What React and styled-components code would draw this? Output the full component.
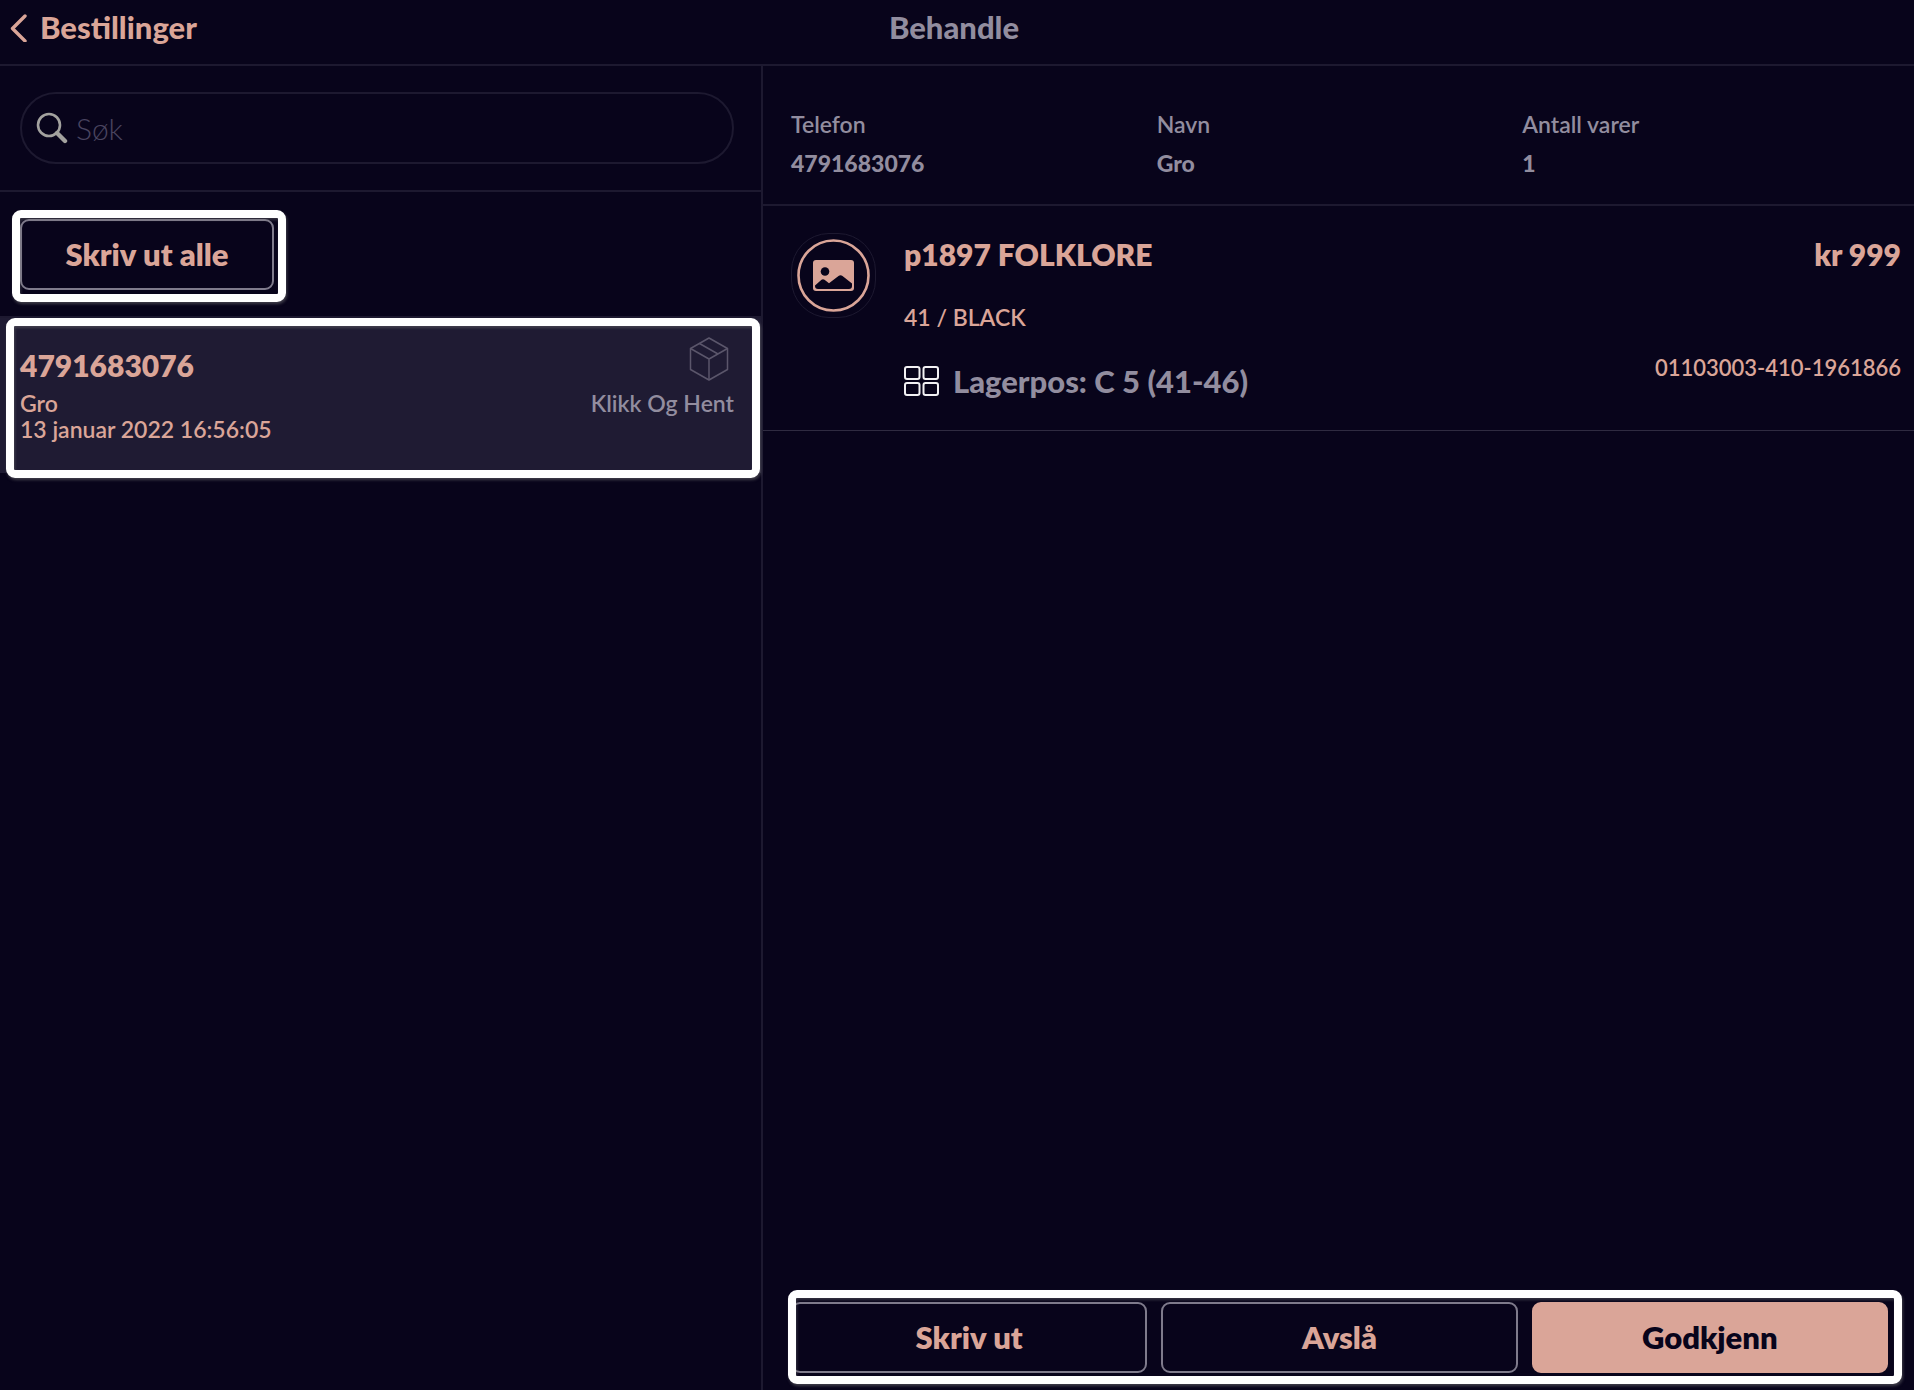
import React from 'react';
import styled, { createGlobalStyle, css } from 'styled-components';

const colors = {
  background: '#08041b',
  selected: '#1f1b33',
  line: '#1d1930',
  outline: '#7f7b8c',
  muted: '#928d9f',
  placeholder: '#4a4560',
  accent: '#daa598',
};

const GlobalStyle = createGlobalStyle`
  *,
  *::before,
  *::after {
    box-sizing: border-box;
  }

  body {
    margin: 0;
    background: ${colors.background};
    color: ${colors.accent};
    font-family: Lato, 'Open Sans', sans-serif;
    font-size: 23px;
    line-height: 26px;
  }

  h1,
  h2,
  p,
  dl,
  dd,
  ul {
    margin: 0;
    padding: 0;
  }
`;

// white marker frame drawn over a part of the screen
const marker = css`
  position: relative;

  &::after {
    content: '';
    position: absolute;
    inset: ${props => props.$inset};
    border: 8px solid #fff;
    border-radius: 9px;
    box-shadow: 1px 2px 3px rgba(120, 120, 120, 0.5),
      inset 1px 2px 3px rgba(120, 120, 120, 0.4);
    pointer-events: none;
  }
`;

const Page = styled.div`
  min-height: 100vh;
  display: flex;
  flex-direction: column;
`;

const Header = styled.header`
  height: 66px;
  padding: 0 16px 10px 10px;
  display: grid;
  grid-template-columns: 1fr auto 1fr;
  align-items: center;
  border-bottom: 2px solid ${colors.line};
`;

const BackLink = styled.a`
  display: flex;
  align-items: center;
  gap: 12px;
  font-size: 31px;
  font-weight: 900;
  line-height: 36px;
  color: ${colors.accent};
  text-decoration: none;
`;

const HeaderTitle = styled.h1`
  font-size: 31px;
  font-weight: 900;
  line-height: 36px;
  color: ${colors.muted};
`;

const Content = styled.div`
  flex: 1;
  display: grid;
  grid-template-columns: 763fr 1151fr;
`;

const Sidebar = styled.aside`
  border-right: 2px solid ${colors.line};
`;

const SearchArea = styled.div`
  padding: 26px 27px 26px 20px;
  border-bottom: 2px solid ${colors.line};
`;

const SearchBox = styled.label`
  height: 72px;
  padding: 0 14px;
  display: flex;
  align-items: center;
  gap: 8px;
  border: 2px solid ${colors.line};
  border-radius: 36px;
`;

const SearchInput = styled.input`
  flex: 1;
  min-width: 0;
  padding: 0;
  border: 0;
  outline: 0;
  background: transparent;
  font-family: inherit;
  font-size: 30px;
  font-weight: 300;
  line-height: 36px;
  color: ${colors.muted};

  &::placeholder {
    color: ${colors.placeholder};
    opacity: 1;
  }
`;

const PrintArea = styled.div`
  padding: 27px 20px 26px;
  display: flex;
  border-bottom: 2px solid ${colors.line};
`;

const PrintMarker = styled.div`
  min-width: 254px;
  ${marker};
`;

const Button = styled.button`
  width: 100%;
  height: 71px;
  padding: 0 16px 2px;
  border: 2px solid ${props => (props.$primary ? colors.accent : colors.outline)};
  border-radius: 9px;
  background: ${props => (props.$primary ? colors.accent : 'transparent')};
  font-family: inherit;
  font-size: 31px;
  font-weight: 800;
  line-height: 36px;
  color: ${props => (props.$primary ? colors.background : colors.accent)};
`;

const OrderList = styled.ul`
  list-style: none;
`;

const Order = styled.li`
  height: 155px;
  padding: 19px 27px 0 20px;
  display: flex;
  justify-content: space-between;
  background: ${colors.selected};
  ${marker};
`;

const OrderInfo = styled.div`
  padding: 10px 0 0;
  font-weight: 600;
`;

const OrderPhone = styled.h2`
  margin: 0 0 7px;
  font-size: 30px;
  font-weight: 800;
  line-height: 36px;
`;

const OrderDelivery = styled.div`
  display: flex;
  flex-direction: column;
  align-items: flex-end;
  gap: 9px;
  font-weight: 600;
  color: ${colors.muted};

  svg {
    margin: 0 5px 0 0;
  }
`;

const Details = styled.main`
  display: flex;
  flex-direction: column;
`;

const Summary = styled.dl`
  height: 140px;
  padding: 45px 26px 0 28px;
  display: grid;
  grid-template-columns: repeat(3, 1fr);
  color: ${colors.muted};
  border-bottom: 2px solid ${colors.line};
`;

const SummaryLabel = styled.dt`
  font-weight: 600;
`;

const SummaryValue = styled.dd`
  && {
    margin: 13px 0 0;
  }
  font-weight: 900;
`;

const Product = styled.section`
  height: 225px;
  padding: 27px 13px 0 28px;
  display: flex;
  gap: 28px;
  border-bottom: 1px solid ${colors.outline}55;
`;

const Thumbnail = styled.div`
  flex: none;
  width: 85px;
  height: 85px;
  display: flex;
  align-items: center;
  justify-content: center;
  border: 1px solid ${colors.line};
  border-radius: 38px;
`;

const ProductInfo = styled.div`
  flex: 1;
  padding: 3px 0 0;
`;

const ProductTitle = styled.h2`
  font-size: 30px;
  font-weight: 800;
  line-height: 36px;
`;

const ProductVariant = styled.p`
  margin: 32px 0 0;
  font-weight: 600;
`;

const Stock = styled.div`
  margin: 33px 0 0;
  display: flex;
  align-items: center;
  gap: 14px;
  font-size: 31px;
  font-weight: 900;
  line-height: 36px;
  color: ${colors.muted};
`;

const ProductPrice = styled.div`
  padding: 3px 0 0;
  text-align: right;
`;

const Sku = styled.p`
  margin: 83px 0 0;
  font-size: 22px;
  font-weight: 600;
`;

const Footer = styled.footer`
  margin: auto 0 0;
  padding: 0 26px 17px 28px;
`;

const Actions = styled.div`
  display: grid;
  grid-template-columns: repeat(3, 1fr);
  gap: 14px;
  ${marker};
`;

const ChevronIcon = () => (
  <svg width="18" height="30" viewBox="0 0 18 30" fill="none">
    <path
      d="M15 4 2.500 16.500 15 29"
      stroke={colors.accent}
      strokeWidth="3.400"
      strokeLinecap="round"
      strokeLinejoin="round"
    />
  </svg>
);

const SearchIcon = () => (
  <svg width="32" height="32" viewBox="0 0 32 32" fill="none" stroke="#a3a29f">
    <circle cx="13" cy="13" r="11" strokeWidth="2.600" />
    <path d="m21 21 8 8" strokeWidth="4.400" strokeLinecap="round" />
  </svg>
);

const BoxIcon = () => (
  <svg
    width="40"
    height="44"
    viewBox="0 0 40 44"
    fill="none"
    stroke="#5b566b"
    strokeWidth="1.500"
    strokeLinejoin="round"
  >
    <path d="M20 1 38.500 11.500v21L20 43 1.500 32.500v-21Z" />
    <path d="M1.500 11.500 20 22l18.500-10.500M20 22v21M10.500 6.500 29 17" />
  </svg>
);

const PictureIcon = () => (
  <svg width="73" height="73" viewBox="0 0 73 73">
    <circle
      cx="36.500"
      cy="36.500"
      r="35"
      fill="none"
      stroke={colors.accent}
      strokeWidth="2.600"
    />
    <rect x="16" y="21" width="41" height="31" rx="3" fill={colors.accent} />
    <g fill={colors.background}>
      <circle cx="28" cy="32.500" r="4.300" />
      <path d="M18 46.500 24.500 40.800q1.500-1.300 3 0L32 44.200l9.500-7.200q2-1.600 4 0L55 44.500V47q0 3-3 3H21q-3 0-3-3Z" />
    </g>
  </svg>
);

const GridIcon = () => (
  <svg
    width="35"
    height="30"
    viewBox="0 0 35 30"
    fill="none"
    stroke="#f2f1f4"
    strokeWidth="2"
  >
    <rect x="1" y="1" width="14.500" height="12" rx="2" />
    <rect x="19.500" y="1" width="14.500" height="12" rx="2" />
    <rect x="1" y="17" width="14.500" height="12" rx="2" />
    <rect x="19.500" y="17" width="14.500" height="12" rx="2" />
  </svg>
);

const summary = [
  { label: 'Telefon', value: '4791683076' },
  { label: 'Navn', value: 'Gro' },
  { label: 'Antall varer', value: '1' },
];

const App = () => (
  <Page>
    <GlobalStyle />
    <Header>
      <BackLink href="#bestillinger">
        <ChevronIcon />
        Bestillinger
      </BackLink>
      <HeaderTitle>Behandle</HeaderTitle>
    </Header>
    <Content>
      <Sidebar>
        <SearchArea>
          <SearchBox>
            <SearchIcon />
            <SearchInput type="text" placeholder="Søk" aria-label="Søk" />
          </SearchBox>
        </SearchArea>
        <PrintArea>
          <PrintMarker $inset="-9px -12px -12px -8px">
            <Button type="button">Skriv ut alle</Button>
          </PrintMarker>
        </PrintArea>
        <OrderList>
          <Order $inset="0 1px -5px 6px">
            <OrderInfo>
              <OrderPhone>4791683076</OrderPhone>
              <p>Gro</p>
              <p>13 januar 2022 16:56:05</p>
            </OrderInfo>
            <OrderDelivery>
              <BoxIcon />
              Klikk Og Hent
            </OrderDelivery>
          </Order>
        </OrderList>
      </Sidebar>
      <Details>
        <Summary>
          {summary.map(item => (
            <div key={item.label}>
              <SummaryLabel>{item.label}</SummaryLabel>
              <SummaryValue>{item.value}</SummaryValue>
            </div>
          ))}
        </Summary>
        <Product>
          <Thumbnail>
            <PictureIcon />
          </Thumbnail>
          <ProductInfo>
            <ProductTitle>p1897 FOLKLORE</ProductTitle>
            <ProductVariant>41 / BLACK</ProductVariant>
            <Stock>
              <GridIcon />
              Lagerpos: C 5 (41-46)
            </Stock>
          </ProductInfo>
          <ProductPrice>
            <ProductTitle as="p">kr 999</ProductTitle>
            <Sku>01103003-410-1961866</Sku>
          </ProductPrice>
        </Product>
        <Footer>
          <Actions $inset="-12px -14px -11px -3px">
            <Button type="button">Skriv ut</Button>
            <Button type="button">Avslå</Button>
            <Button type="button" $primary>
              Godkjenn
            </Button>
          </Actions>
        </Footer>
      </Details>
    </Content>
  </Page>
);

export default App;
